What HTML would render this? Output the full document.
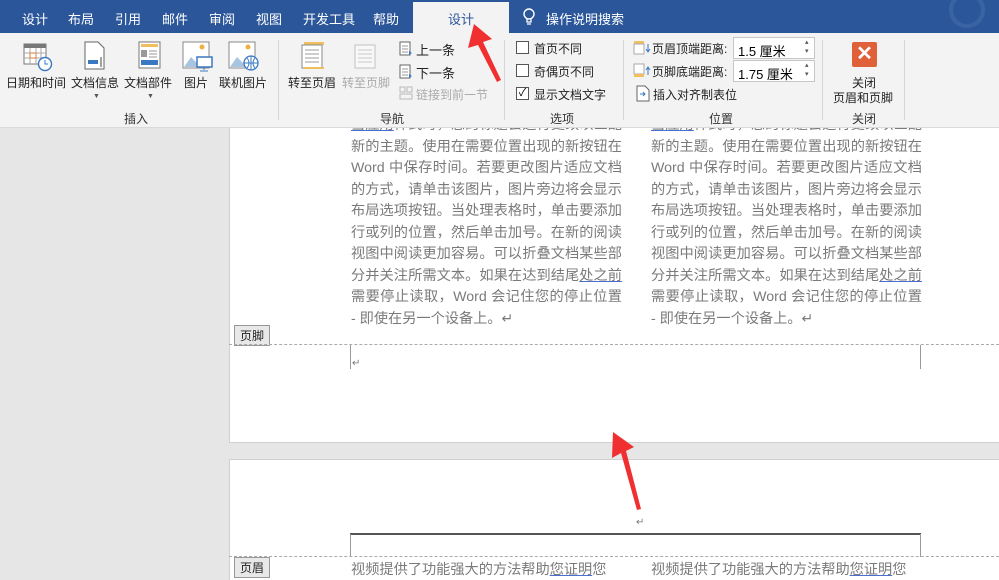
<!DOCTYPE html>
<html><head><meta charset="utf-8"><style>
*{margin:0;padding:0;box-sizing:border-box}
body{width:999px;height:580px;overflow:hidden;position:relative;background:#e6e6e6;font-family:"Liberation Sans","Noto Sans CJK SC",sans-serif}
.a{position:absolute;white-space:nowrap}
.tab{color:#fff;font-size:13px;top:9px}
.rb{font-size:12px;color:#222}
.grp{font-size:12px;color:#333;top:110px}
.sep{position:absolute;top:40px;width:1px;height:80px;background:#d5d5d5}
.col{position:absolute;width:271px;font-size:14.2px;color:#7a7a7a;line-height:21.5px}
.col div{white-space:nowrap;text-align:justify;text-align-last:justify;height:21.5px}
.col div.l{text-align-last:left}
.cb{position:absolute;width:13px;height:13px;border:1px solid #555;background:#fff}
.lbl{position:absolute;font-size:12px;background:#e8e8e8;border:1px solid #999;padding:1px 5px;color:#222}
.u{text-decoration:underline;text-decoration-color:#4a6fd0}
</style></head><body>
<!-- page 1 -->
<div class="a" style="left:229px;top:128px;width:770px;height:315px;background:#fff;border-left:1px solid #d0d0d0;border-bottom:1px solid #d0d0d0;overflow:hidden">
<div class="col" style="left:121px;top:-13px">
<div><span class="u">当应用</span>样式时，您的标题会进行更改以匹配</div>
<div>新的主题。使用在需要位置出现的新按钮在</div>
<div>Word 中保存时间。若要更改图片适应文档</div>
<div>的方式，请单击该图片，图片旁边将会显示</div>
<div>布局选项按钮。当处理表格时，单击要添加</div>
<div>行或列的位置，然后单击加号。在新的阅读</div>
<div>视图中阅读更加容易。可以折叠文档某些部</div>
<div>分并关注所需文本。如果在达到结尾<span class="u">处之前</span></div>
<div>需要停止读取，Word 会记住您的停止位置</div>
<div class="l">- 即使在另一个设备上。↵</div>
</div>
<div class="col" style="left:421px;top:-13px">
<div><span class="u">当应用</span>样式时，您的标题会进行更改以匹配</div>
<div>新的主题。使用在需要位置出现的新按钮在</div>
<div>Word 中保存时间。若要更改图片适应文档</div>
<div>的方式，请单击该图片，图片旁边将会显示</div>
<div>布局选项按钮。当处理表格时，单击要添加</div>
<div>行或列的位置，然后单击加号。在新的阅读</div>
<div>视图中阅读更加容易。可以折叠文档某些部</div>
<div>分并关注所需文本。如果在达到结尾<span class="u">处之前</span></div>
<div>需要停止读取，Word 会记住您的停止位置</div>
<div class="l">- 即使在另一个设备上。↵</div>
</div>
</div>
<div class="lbl" style="left:234px;top:325px">页脚</div>
<div class="a" style="left:229px;top:344px;width:770px;border-top:1px dashed #aaa"></div>
<div class="a" style="left:350px;top:345px;width:1px;height:24px;background:#999"></div>
<div class="a" style="left:920px;top:345px;width:1px;height:24px;background:#999"></div>
<div class="a" style="left:352px;top:358px;font-size:10px;color:#777">↵</div>
<!-- page 2 -->
<div class="a" style="left:229px;top:459px;width:770px;height:121px;background:#fff;border-left:1px solid #d0d0d0;border-top:1px solid #d0d0d0"></div>
<div class="a" style="left:636px;top:517px;font-size:10px;color:#777">↵</div>
<div class="a" style="left:350px;top:533px;width:571px;height:2px;background:#555"></div>
<div class="a" style="left:350px;top:534px;width:1px;height:23px;background:#999"></div>
<div class="a" style="left:920px;top:534px;width:1px;height:23px;background:#999"></div>
<div class="a" style="left:229px;top:556px;width:770px;border-top:1px dashed #aaa"></div>
<div class="lbl" style="left:234px;top:557px">页眉</div>
<div class="a" style="left:351px;top:559px;font-size:14.2px;color:#7a7a7a">视频提供了功能强大的方法帮助<span class="u">您证明</span>您</div>
<div class="a" style="left:651px;top:559px;font-size:14.2px;color:#7a7a7a">视频提供了功能强大的方法帮助<span class="u">您证明</span>您</div>
<!-- tab bar -->
<div class="a" style="left:0;top:0;width:999px;height:33px;background:#2b579a"></div>
<div class="a" style="left:413px;top:2px;width:96px;height:31px;background:#f3f3f3"></div>
<div class="a tab" style="left:22px">设计</div>
<div class="a tab" style="left:68px">布局</div>
<div class="a tab" style="left:115px">引用</div>
<div class="a tab" style="left:162px">邮件</div>
<div class="a tab" style="left:209px">审阅</div>
<div class="a tab" style="left:256px">视图</div>
<div class="a tab" style="left:303px">开发工具</div>
<div class="a tab" style="left:373px">帮助</div>
<div class="a tab" style="left:448px;color:#2b579a">设计</div>
<svg class="a" style="left:522px;top:8px" width="14" height="18"><circle cx="7" cy="6" r="5" fill="none" stroke="#fff" stroke-width="1.4"/><path d="M5 11v3h4v-3M5 16h4" stroke="#fff" stroke-width="1.3" fill="none"/></svg>
<div class="a tab" style="left:546px">操作说明搜索</div>
<svg class="a" style="left:925px;top:0" width="74" height="33"><circle cx="42" cy="10" r="16" fill="none" stroke="#3a63a3" stroke-width="4"/></svg>
<!-- ribbon -->
<div class="a" style="left:0;top:33px;width:999px;height:95px;background:#f3f3f3;border-bottom:1px solid #dadada"></div>
<svg class="a" style="left:23px;top:42px" width="30" height="30"><rect x="1" y="2" width="22" height="20" fill="#fff" stroke="#777"/><rect x="1" y="2" width="22" height="4" fill="#777"/><path d="M1 11h22M1 16h22M7 6v16M13 6v16M18 6v16" stroke="#aaa"/><rect x="7" y="11" width="6" height="5" fill="none" stroke="#e07b39"/><circle cx="22" cy="22" r="6.5" fill="#fff" stroke="#3a79c2" stroke-width="1.4"/><path d="M22 18v4h3" stroke="#3a79c2" fill="none"/></svg>
<svg class="a" style="left:84px;top:41px" width="24" height="30"><path d="M1 1h13l6 6v21H1z" fill="#fff" stroke="#666"/><rect x="4" y="19" width="10" height="4" fill="#3a79c2"/><path d="M17 16v10" stroke="#444"/></svg>
<svg class="a" style="left:138px;top:41px" width="24" height="28"><rect x="1" y="1" width="21" height="26" fill="#fff" stroke="#777"/><rect x="3" y="3" width="17" height="3" fill="#f0c060"/><rect x="3" y="9" width="6" height="7" fill="#999"/><path d="M11 10h8M11 13h8M11 16h8" stroke="#999"/><rect x="3" y="19" width="17" height="5" fill="#3a79c2"/></svg>
<svg class="a" style="left:182px;top:41px" width="32" height="32"><rect x="1" y="1" width="26" height="26" fill="#fff" stroke="#888"/><path d="M2 26l7-10 6 6 4-4 7 8z" fill="#a9c4e0"/><circle cx="20" cy="6" r="2.5" fill="#f0b040"/><rect x="15" y="16" width="15" height="10" fill="#fff" stroke="#3a79c2" stroke-width="1.5"/><path d="M22 26v3M18 30h8" stroke="#3a79c2"/></svg>
<svg class="a" style="left:228px;top:41px" width="32" height="32"><rect x="1" y="1" width="26" height="26" fill="#fff" stroke="#888"/><path d="M2 26l7-10 6 6 4-4 7 8z" fill="#a9c4e0"/><circle cx="20" cy="6" r="2.5" fill="#f0b040"/><circle cx="23" cy="22" r="7" fill="#fff" stroke="#3a79c2" stroke-width="1.3"/><path d="M16 22h14M23 15v14M19 17q4 5 0 10M27 17q-4 5 0 10" stroke="#3a79c2" fill="none"/></svg>
<div class="a rb" style="left:6px;top:74px">日期和时间</div>
<div class="a rb" style="left:71px;top:74px">文档信息</div>
<div class="a rb" style="left:124px;top:74px">文档部件</div>
<div class="a rb" style="left:184px;top:74px">图片</div>
<div class="a rb" style="left:219px;top:74px">联机图片</div>
<div class="a" style="left:93px;top:93px;font-size:7px;color:#555">▼</div>
<div class="a" style="left:147px;top:93px;font-size:7px;color:#555">▼</div>
<div class="a grp" style="left:124px">插入</div>
<div class="sep" style="left:278px"></div>
<svg class="a" style="left:300px;top:40px" width="28" height="30"><rect x="4" y="2" width="20" height="3" fill="#f0c060"/><rect x="2" y="5" width="20" height="23" fill="#fff" stroke="#888"/><path d="M5 10h14M5 14h14M5 18h14M5 22h14" stroke="#999"/><rect x="4" y="27" width="20" height="2" fill="#f0c060"/></svg>
<svg class="a" style="left:353px;top:40px" width="28" height="30" opacity=".45"><rect x="2" y="5" width="20" height="23" fill="#fff" stroke="#888"/><path d="M5 10h14M5 14h14M5 18h14M5 22h14" stroke="#999"/></svg>
<div class="a rb" style="left:288px;top:74px">转至页眉</div>
<div class="a rb" style="left:342px;top:74px;color:#aaa">转至页脚</div>
<svg class="a" style="left:399px;top:41px" width="14" height="15"><rect x="1" y="1" width="10" height="13" fill="#fff" stroke="#666"/><path d="M3 5h6M3 8h6M3 11h6" stroke="#999"/><path d="M10 10l3 2-3 2z" fill="#3a79c2"/></svg>
<svg class="a" style="left:399px;top:64px" width="14" height="15"><rect x="1" y="1" width="10" height="13" fill="#fff" stroke="#666"/><path d="M3 5h6M3 8h6M3 11h6" stroke="#999"/><path d="M10 10l3 2-3 2z" fill="#3a79c2"/></svg>
<svg class="a" style="left:399px;top:86px" width="14" height="15" opacity=".4"><rect x="1" y="1" width="5" height="5" fill="none" stroke="#666"/><rect x="8" y="1" width="5" height="5" fill="none" stroke="#666"/><rect x="1" y="8" width="12" height="5" fill="none" stroke="#666"/></svg>
<div class="a rb" style="left:416px;top:40px;font-size:13px">上一条</div>
<div class="a rb" style="left:416px;top:63px;font-size:13px">下一条</div>
<div class="a rb" style="left:416px;top:86px;color:#aaa">链接到前一节</div>
<div class="a grp" style="left:380px">导航</div>
<div class="sep" style="left:504px"></div>
<div class="cb" style="left:516px;top:41px"></div>
<div class="cb" style="left:516px;top:64px"></div>
<div class="cb" style="left:516px;top:87px;font-size:11px;line-height:11px;text-align:center">✓</div>
<div class="a rb" style="left:534px;top:40px">首页不同</div>
<div class="a rb" style="left:534px;top:63px">奇偶页不同</div>
<div class="a rb" style="left:534px;top:86px">显示文档文字</div>
<div class="a grp" style="left:550px">选项</div>
<div class="sep" style="left:623px"></div>
<svg class="a" style="left:633px;top:40px" width="20" height="16"><rect x="1" y="1" width="10" height="3" fill="#f0c060"/><rect x="1" y="4" width="10" height="10" fill="#fff" stroke="#aaa"/><path d="M15 4v7M13 9l2 3 2-3" stroke="#3a79c2" fill="none"/></svg>
<svg class="a" style="left:633px;top:63px" width="20" height="16"><rect x="1" y="1" width="10" height="10" fill="#fff" stroke="#aaa"/><rect x="1" y="11" width="10" height="3" fill="#f0c060"/><path d="M15 12V5M13 7l2-3 2 3" stroke="#3a79c2" fill="none"/></svg>
<svg class="a" style="left:636px;top:85px" width="14" height="17"><path d="M1 1h8l4 4v11H1z" fill="#fff" stroke="#666"/><path d="M4 9h5M7 7l2 2-2 2" stroke="#3a79c2" fill="none"/></svg>
<div class="a rb" style="left:652px;top:40px">页眉顶端距离:</div>
<div class="a rb" style="left:652px;top:63px">页脚底端距离:</div>
<div class="a rb" style="left:653px;top:86px">插入对齐制表位</div>
<div class="a" style="left:733px;top:37px;width:82px;height:22px;background:#fff;border:1px solid #c6c6c6;font-size:13px;padding:3px 4px">1.5 厘米</div>
<div class="a" style="left:733px;top:60px;width:82px;height:22px;background:#fff;border:1px solid #c6c6c6;font-size:13px;padding:3px 4px">1.75 厘米</div>
<div class="a" style="left:805px;top:38px;font-size:7px;color:#555;line-height:9px">▴<br>▾</div>
<div class="a" style="left:805px;top:61px;font-size:7px;color:#555;line-height:9px">▴<br>▾</div>
<div class="a grp" style="left:709px">位置</div>
<div class="sep" style="left:822px"></div>
<div class="a" style="left:852px;top:42px;width:25px;height:25px;background:#e0603a;border-radius:2px;color:#fff;font-size:20px;font-weight:bold;text-align:center;line-height:25px">✕</div>
<div class="a rb" style="left:852px;top:74px">关闭</div>
<div class="a rb" style="left:833px;top:89px">页眉和页脚</div>
<div class="a grp" style="left:852px">关闭</div>
<div class="sep" style="left:904px"></div>
<!-- arrows -->
<svg class="a" style="left:0;top:0" width="999" height="580">
<path d="M474 24 L468 48 L478 45 L497 82 L501 80 L483 42 L492 39 Z" fill="#f03030"/>
<path d="M613 432 L612 458 L621 453 L637 510 L641 509 L626 451 L634 447 Z" fill="#f03030"/>
</svg>
</body></html>
